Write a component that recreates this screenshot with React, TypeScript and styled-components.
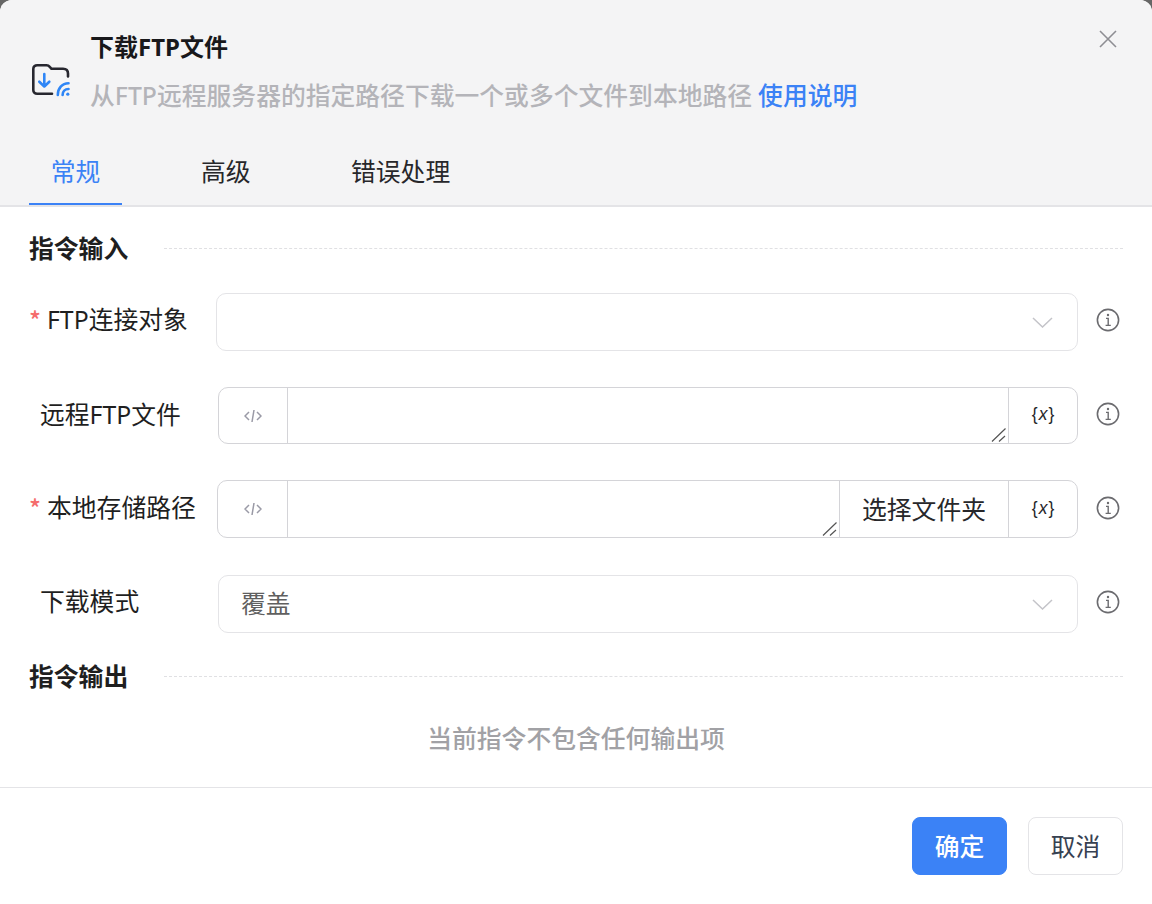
import React from 'react'
import styled, { createGlobalStyle } from 'styled-components'

const GlobalStyle = createGlobalStyle`
	html, body {
		margin: 0;
		padding: 0;
		background: #666;
	}
	* {
		box-sizing: border-box;
	}
`

const Modal = styled.div`
	width: 1152px;
	height: 904px;
	display: flex;
	flex-direction: column;
	background: #fff;
	border-radius: 12px 12px 0 0;
	overflow: hidden;
	font-family: "Noto Sans", "Noto Sans CJK SC", sans-serif;
	font-size: 24.8px;
	color: #1f1f1f;
`

const Header = styled.div`
	height: 207px;
	background: #f4f4f5;
	border-bottom: 2px solid #e4e4e7;
	padding: 24px 29px 0;
	position: relative;
`

const HeadTop = styled.div`
	display: flex;
	align-items: flex-start;
	gap: 18px;
	height: 96px;
`

const IconSlot = styled.div`
	flex: none;
	margin: 38px 0 0 2px;
	height: 36px;
`

const HeadText = styled.div`
	display: flex;
	flex-direction: column;
	gap: 12px;
	padding-top: 5px;
`

const Title = styled.div`
	font-size: 24px;
	line-height: 36px;
	font-weight: 700;
	color: #18181b;
`

const Sub = styled.div`
	line-height: 36px;
	font-weight: 500;
	color: #b4b4b9;
`

const HelpLink = styled.span`
	color: #3b82f6;
	margin-left: 6px;
`

const CloseBtn = styled.button`
	position: absolute;
	top: 27px;
	right: 32px;
	width: 24px;
	height: 24px;
	padding: 0;
	border: none;
	background: none;
	display: flex;
	align-items: center;
	justify-content: center;
`

const Tabs = styled.div`
	display: flex;
	margin-top: 34px;
`

const Tab = styled.div<{ $active?: boolean; $width: number; $gap: number }>`
	width: ${p => p.$width}px;
	margin-right: ${p => p.$gap}px;
	height: 51px;
	line-height: 34px;
	text-align: center;
	white-space: nowrap;
	color: ${p => (p.$active ? '#3b82f6' : '#27272a')};
	border-bottom: 2px solid ${p => (p.$active ? '#3b82f6' : 'transparent')};
`

const Body = styled.div`
	flex: 1;
	padding: 24px 29px 0;
`

const SectionHead = styled.div<{ $top?: number }>`
	display: flex;
	align-items: center;
	height: 36px;
	gap: 36px;
	margin-top: ${p => p.$top ?? 0}px;
`

const SectionTitle = styled.div`
	font-weight: 700;
	color: #1f1f1f;
	white-space: nowrap;
	padding-bottom: 4px;
`

const Dashed = styled.div`
	flex: 1;
	border-top: 1px dashed #e0e0e3;
	margin-top: -2px;
`

const Row = styled.div<{ $top: number }>`
	display: flex;
	align-items: flex-start;
	margin-top: ${p => p.$top}px;
`

const Label = styled.div<{ $width: number; $required?: boolean; $line?: number }>`
	width: ${p => p.$width}px;
	flex: none;
	display: flex;
	line-height: ${p => p.$line ?? 54}px;
	padding-left: ${p => (p.$required ? 0 : 11)}px;
	color: #1f1f1f;
	white-space: nowrap;
`

const Star = styled.span`
	color: #f56c6c;
	width: 18px;
	font-family: "Noto Sans CJK SC", sans-serif;
	font-weight: 500;
`

const Field = styled.div<{ $height: number; $soft?: boolean }>`
	width: 100%;
	flex: 1;
	height: ${p => p.$height}px;
	display: flex;
	align-items: stretch;
	border: 1px solid ${p => (p.$soft ? '#e4e4e7' : '#d4d4d8')};
	border-radius: 10px;
	overflow: hidden;
	background: #fff;
`

const SelectValue = styled.div`
	flex: 1;
	padding-left: 22px;
	line-height: 54px;
	color: #5f5f5f;
`

const Caret = styled.div`
	width: 70px;
	display: flex;
	align-items: center;
	justify-content: center;
`

const Addon = styled.div<{ $width: number; $side?: 'left' | 'right' }>`
	width: ${p => p.$width}px;
	flex: none;
	display: flex;
	align-items: center;
	justify-content: center;
	color: #27272a;
	${p => (p.$side === 'left' ? 'border-right: 1px solid #d4d4d8;' : 'border-left: 1px solid #d4d4d8;')}
`

const FolderPick = styled(Addon)`
	padding-bottom: 3px;
`

const VarMark = styled.span`
	font-size: 17.5px;
	color: #27272a;
	font-family: "Liberation Sans", sans-serif;
	padding-bottom: 2px;
	em {
		margin: 0 1px;
	}
`

const AreaWrap = styled.div`
	flex: 1;
	min-width: 0;
	position: relative;
`

const Area = styled.textarea`
	width: 100%;
	height: 100%;
	border: none;
	outline: none;
	resize: none;
	background: #fff;
	display: block;
`

const Grip = styled.svg`
	position: absolute;
	right: 1px;
	bottom: 1px;
`

const InfoSlot = styled.div<{ $top: number }>`
	width: 45px;
	flex: none;
	display: flex;
	justify-content: flex-end;
	padding: ${p => p.$top}px 3px 0 0;
`

const Empty = styled.div`
	text-align: center;
	color: #a1a1a5;
	font-weight: 500;
	line-height: 36px;
	margin-top: 25px;
`

const Footer = styled.div`
	height: 117px;
	border-top: 1px solid #e4e4e7;
	padding: 29px 29px 0 0;
	display: flex;
	justify-content: flex-end;
	gap: 21px;
`

const Button = styled.button<{ $primary?: boolean }>`
	width: 95px;
	height: 58px;
	border-radius: 8px;
	font-family: inherit;
	font-size: 24.8px;
	font-weight: ${p => (p.$primary ? 500 : 400)};
	color: ${p => (p.$primary ? '#fff' : '#374151')};
	background: ${p => (p.$primary ? '#3b82f6' : '#fff')};
	border: 1px solid ${p => (p.$primary ? '#3b82f6' : '#e4e4e7')};
	padding: 0 0 3px;
`

const FolderIcon = () => (
	<svg width="41" height="36" viewBox="0 0 41 36" fill="none">
		<path
			d="M21 31.7H6.3C3.5 31.7 2.3 30 2.3 28V7C2.3 4.6 3.8 3.3 6.3 3.3H15.5C17 3.3 18 4 19 5.2L20.5 6.8H32C35.5 6.8 37 8.8 37 11.5V14.5"
			stroke="#27272f"
			strokeWidth="2.6"
			strokeLinecap="round"
			strokeLinejoin="round"
		/>
		<path
			d="M13.3 12V24M8.3 19.7L13.3 24.5L18.3 19.7"
			stroke="#2f86f6"
			strokeWidth="2.6"
			strokeLinecap="round"
			strokeLinejoin="round"
		/>
		<path d="M26.8 33C26.8 26.5 31 21.3 37.5 21.3" stroke="#2f86f6" strokeWidth="2.6" strokeLinecap="round" />
		<path d="M31.6 33C31.6 29.5 34 27 37.5 27" stroke="#2f86f6" strokeWidth="2.6" strokeLinecap="round" />
		<circle cx="36.8" cy="32.2" r="1.6" fill="#2f86f6" />
	</svg>
)

const CloseIcon = () => (
	<svg width="18" height="18" viewBox="0 0 18 18" fill="none">
		<path d="M1 1L17 17M17 1L1 17" stroke="#8e8e93" strokeWidth="1.6" />
	</svg>
)

const ChevronIcon = () => (
	<svg width="21" height="11" viewBox="0 0 21 11" fill="none">
		<path d="M1 1L10.5 10L20 1" stroke="#c4c4c9" strokeWidth="1.5" />
	</svg>
)

const InfoIcon = () => (
	<svg width="24" height="24" viewBox="0 0 24 24" fill="none">
		<circle cx="12" cy="12" r="10.6" stroke="#6b6b6f" strokeWidth="1.6" />
		<path d="M10 10.4H12.2V17.4M9.6 17.4H14.8" stroke="#6b6b6f" strokeWidth="1.4" />
		<circle cx="12" cy="7" r="1.2" fill="#6b6b6f" />
	</svg>
)

const CodeIcon = () => (
	<svg width="18" height="14" viewBox="0 0 18 14" fill="none">
		<path d="M5 3L1 7L5 11M13 3L17 7L13 11" stroke="#9a9aa6" strokeWidth="1.5" />
		<path d="M10 1L8 13" stroke="#9a9aa6" strokeWidth="1.5" />
	</svg>
)

const Info = ({ top = 15 }: { top?: number }) => (
	<InfoSlot $top={top}>
		<InfoIcon />
	</InfoSlot>
)

const Var = () => (
	<Addon $width={69} $side="right">
		<VarMark>
			{'{'}
			<em>x</em>
			{'}'}
		</VarMark>
	</Addon>
)

const Code = ({ width }: { width: number }) => (
	<Addon $width={width} $side="left">
		<CodeIcon />
	</Addon>
)

const Input = () => (
	<AreaWrap>
		<Area />
		<Grip width="16" height="14" viewBox="0 0 16 14" fill="none">
			<path d="M1 13.5L14.5 0.5M8 13.5L14 8" stroke="#555" strokeWidth="1.2" />
		</Grip>
	</AreaWrap>
)

export default function App() {
	return (
		<>
			<GlobalStyle />
			<Modal>
				<Header>
					<HeadTop>
						<IconSlot>
							<FolderIcon />
						</IconSlot>
						<HeadText>
							<Title>下载FTP文件</Title>
							<Sub>
								从FTP远程服务器的指定路径下载一个或多个文件到本地路径
								<HelpLink>使用说明</HelpLink>
							</Sub>
						</HeadText>
					</HeadTop>
					<CloseBtn>
						<CloseIcon />
					</CloseBtn>
					<Tabs>
						<Tab $active $width={93} $gap={79}>常规</Tab>
						<Tab $width={49} $gap={101}>高级</Tab>
						<Tab $width={98} $gap={0}>错误处理</Tab>
					</Tabs>
				</Header>
				<Body>
					<SectionHead>
						<SectionTitle>指令输入</SectionTitle>
						<Dashed />
					</SectionHead>
					<Row $top={26}>
						<Label $width={187} $required $line={52}>
							<Star>*</Star>FTP连接对象
						</Label>
						<Field $height={58} $soft>
							<SelectValue />
							<Caret>
								<ChevronIcon />
							</Caret>
						</Field>
						<Info />
					</Row>
					<Row $top={36}>
						<Label $width={189}>远程FTP文件</Label>
						<Field $height={57}>
							<Code width={69} />
							<Input />
							<Var />
						</Field>
						<Info />
					</Row>
					<Row $top={36}>
						<Label $width={188} $required>
							<Star>*</Star>本地存储路径
						</Label>
						<Field $height={58}>
							<Code width={70} />
							<Input />
							<FolderPick $width={169} $side="right">选择文件夹</FolderPick>
							<Var />
						</Field>
						<Info top={16} />
					</Row>
					<Row $top={37}>
						<Label $width={189} $line={53}>下载模式</Label>
						<Field $height={58} $soft>
							<SelectValue>覆盖</SelectValue>
							<Caret>
								<ChevronIcon />
							</Caret>
						</Field>
						<Info />
					</Row>
					<SectionHead $top={26}>
						<SectionTitle>指令输出</SectionTitle>
						<Dashed />
					</SectionHead>
					<Empty>当前指令不包含任何输出项</Empty>
				</Body>
				<Footer>
					<Button $primary>确定</Button>
					<Button>取消</Button>
				</Footer>
			</Modal>
		</>
	)
}
